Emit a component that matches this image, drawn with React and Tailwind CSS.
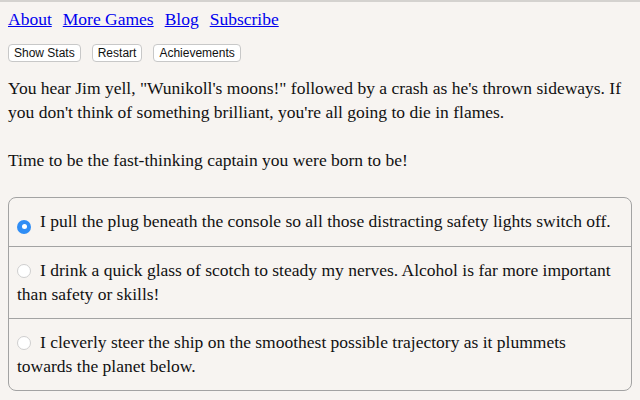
import { useState } from 'react'

const options = [
  'I pull the plug beneath the console so all those distracting safety lights switch off.',
  'I drink a quick glass of scotch to steady my nerves. Alcohol is far more important than safety or skills!',
  'I cleverly steer the ship on the smoothest possible trajectory as it plummets towards the planet below.',
]

function Radio({ checked }) {
  if (checked) {
    return (
      <span className="mr-[9px] inline-flex h-[14px] w-[14px] items-center justify-center rounded-full bg-[#2f8df5] align-[-2px]">
        <span className="h-[5px] w-[5px] rounded-full bg-white" />
      </span>
    )
  }
  return (
    <span className="mr-[9px] inline-block h-[14px] w-[14px] rounded-full border border-[#cfcfcf] bg-white align-[-2px]" />
  )
}

export default function App() {
  const [choice, setChoice] = useState(0)

  return (
    <div className="min-h-[400px] border-t-2 border-[#d4d2cf] bg-[#f7f4f1] px-2 text-[#111] font-['Liberation_Serif',serif]">
      {/* Header links */}
      <nav className="flex gap-[11px] pt-[6px] text-[17.5px] leading-[22px]">
        <a href="#" className="text-[#0000ee] underline">About</a>
        <a href="#" className="text-[#0000ee] underline">More Games</a>
        <a href="#" className="text-[#0000ee] underline">Blog</a>
        <a href="#" className="text-[#0000ee] underline">Subscribe</a>
      </nav>

      {/* Buttons */}
      <div className="mt-[14px] flex gap-[11px] font-['Liberation_Sans',sans-serif] text-[12px]">
        <button className="h-[18px] rounded-[4px] border border-[#c8c8c8] bg-white px-[5px] leading-none">Show Stats</button>
        <button className="h-[18px] rounded-[4px] border border-[#c8c8c8] bg-white px-[5px] leading-none">Restart</button>
        <button className="h-[18px] rounded-[4px] border border-[#c8c8c8] bg-white px-[5px] leading-none">Achievements</button>
      </div>

      {/* Story text */}
      <div className="mt-[14px] text-[17.5px] leading-[24px]">
        <p>
          You hear Jim yell, "Wunikoll's moons!" followed by a crash as he's thrown sideways. If you don't think of something brilliant, you're all going to die in flames.
        </p>
        <p className="mt-[24px]">Time to be the fast-thinking captain you were born to be!</p>
      </div>

      {/* Choices */}
      <div className="mt-[25px] overflow-hidden rounded-[8px] border border-[#a3a3a3] text-[17.5px] leading-[24px]">
        {options.map((text, i) => (
          <div
            key={i}
            onClick={() => setChoice(i)}
            className={`cursor-pointer pt-[11px] pb-[12px] pl-[8px] pr-[10px] ${i > 0 ? 'border-t border-[#a3a3a3]' : ''}`}
          >
            <Radio checked={choice === i} />
            {text}
          </div>
        ))}
      </div>
    </div>
  )
}
